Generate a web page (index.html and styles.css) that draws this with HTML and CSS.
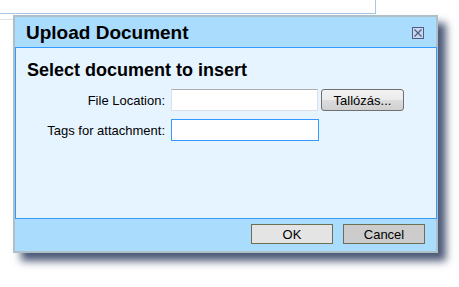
FILE: index.html
```html
<!DOCTYPE html>
<html lang="en">
<head>
  <meta charset="UTF-8">
  <title>Upload Document</title>
  <link rel="stylesheet" href="styles.css">
</head>
<body>
  <div class="page-top"></div>
  <div class="page-line"></div>

  <div class="dialog">
    <div class="dialog-title">
      <span>Upload Document</span>
      <svg class="close" width="12" height="12" viewBox="0 0 12 12">
        <rect x="0.5" y="0.5" width="11" height="11" fill="#c8d8f0" stroke="#4e5c80"/>
        <path d="M2.5 2.5 L9.5 9.5 M9.5 2.5 L2.5 9.5" stroke="#4e5c80" stroke-width="1.2"/>
      </svg>
    </div>

    <div class="dialog-body">
      <h2>Select document to insert</h2>
      <div class="form-grid">
        <label for="file">File Location:</label>
        <div class="file-row">
          <input type="text" id="file" class="field">
          <button class="browse">Tallózás...</button>
        </div>
        <label for="tags">Tags for attachment:</label>
        <div>
          <input type="text" id="tags" class="field focused">
        </div>
      </div>
    </div>

    <div class="dialog-footer">
      <button class="btn ok">OK</button>
      <button class="btn cancel">Cancel</button>
    </div>
  </div>
</body>
</html>
```

FILE: styles.css
```css
body {
  margin: 0;
  background: #ffffff;
  font-family: "Liberation Sans", Arial, sans-serif;
  width: 459px;
  height: 287px;
  overflow: hidden;
}

.page-top {
  width: 375px;
  height: 13px;
  border-right: 1px solid #a9c8e8;
  border-bottom: 1px solid #a9c8e8;
}

.page-line {
  margin-top: 5px;
  width: 60px;
  border-top: 1px solid #e2e2e2;
}

/* floating modal window */
.dialog {
  position: absolute;
  left: 13px;
  top: 15px;
  width: 421px;
  height: 234px;
  border: 2px solid #aebfc8;
  background: #aadcfe;
  box-shadow: 8px 8px 8px rgba(45, 60, 95, 0.85);
  display: flex;
  flex-direction: column;
}

.dialog-title {
  height: 30px;
  padding: 0 12px 0 11px;
  display: flex;
  align-items: center;
  justify-content: space-between;
  font-size: 19px;
  font-weight: bold;
  color: #000;
}

.dialog-title span {
  margin-top: 1px;
}

.close {
  display: block;
  margin-top: 2px;
}

.dialog-body {
  height: 170px;
  margin-right: -1px;
  background: #e6f4ff;
  border: 1px solid #3399ff;
  padding: 0 11px;
}

.dialog-body h2 {
  margin: 11px 0 0 0;
  font-size: 18px;
  font-weight: bold;
  line-height: 22px;
}

.form-grid {
  display: grid;
  grid-template-columns: 138px auto;
  column-gap: 6px;
  row-gap: 8px;
  margin-top: 8px;
  align-items: center;
}

.form-grid label {
  text-align: right;
  font-size: 13px;
  color: #000;
}

.file-row {
  display: flex;
  gap: 3px;
  align-items: center;
}

.field {
  box-sizing: border-box;
  width: 147px;
  height: 22px;
  margin: 0;
  border: 1px solid #dcdfe6;
  border-top-color: #abadb3;
  background: #fff;
  padding: 0 3px;
}

.field.focused {
  width: 148px;
  border: 1px solid #3399ff;
}

.browse {
  box-sizing: border-box;
  width: 83px;
  height: 22px;
  margin: 0;
  padding: 0;
  border: 1px solid #707070;
  border-radius: 3px;
  background: linear-gradient(#f2f2f2, #ebebeb 50%, #dddddd 51%, #cfcfcf);
  font-family: "Liberation Sans", Arial, sans-serif;
  font-size: 13px;
  color: #000;
}

.dialog-footer {
  flex: 1;
  display: flex;
  justify-content: flex-end;
  align-items: flex-start;
  gap: 10px;
  padding: 5px 11px 0 0;
}

.btn {
  box-sizing: border-box;
  width: 82px;
  height: 20px;
  margin: 0;
  padding: 0;
  border: 1px solid #6e6e50;
  font-family: "Liberation Sans", Arial, sans-serif;
  font-size: 13px;
  color: #000;
}

.btn.ok {
  background: #e4e4e4;
}

.btn.cancel {
  background: #cccccc;
}
```
